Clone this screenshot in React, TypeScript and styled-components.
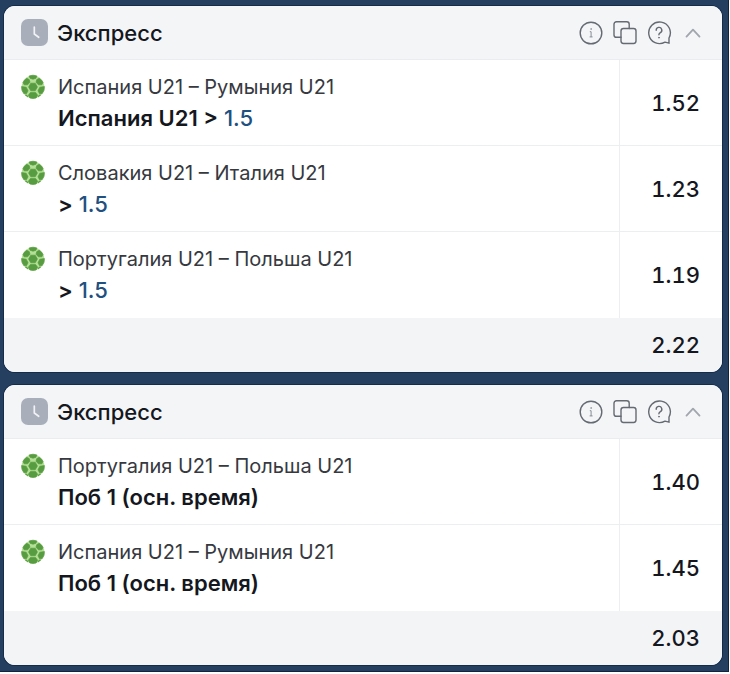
import React, { useState } from "react";
import styled, { createGlobalStyle } from "styled-components";

const GlobalStyle = createGlobalStyle`
  * { box-sizing: border-box; }
  body {
    margin: 0;
    background: #ffffff;
    font-family: Inter, "Noto Sans", sans-serif;
    color: #15171e;
  }
`;

const Page = styled.main`
  display: flex;
  flex-direction: column;
  gap: 13px;
  margin: 0 1px 3px 0;
  padding: 6px 6px 6px 4px;
  background: #243f60;
  border: solid #10233f;
  border-width: 0 1px 1px 0;
`;

const Card = styled.section`
  overflow: hidden;
  border-radius: 11px;
  background: #ffffff;
  box-shadow: 0 0 0 1px #142b49;
`;

const Header = styled.header`
  display: flex;
  align-items: center;
  gap: 9px;
  height: 54px;
  padding: 0 16px 0 17px;
  background: #f3f5f7;
  border-bottom: 1px solid #eaecef;
`;

const Title = styled.h2`
  flex: 1;
  margin: 0;
  font-size: 22px;
  line-height: 28px;
  font-weight: 500;
`;

const Actions = styled.div`
  display: flex;
  align-items: center;
  gap: 8px;
`;

const IconButton = styled.button`
  display: flex;
  padding: 0;
  border: 0;
  background: none;
  color: #666a72;
  cursor: pointer;
`;

const ToggleButton = styled(IconButton)`
  color: #a2a6ad;
`;

const List = styled.ul`
  margin: 0;
  padding: 0;
  list-style: none;
`;

const Row = styled.li`
  display: flex;
  height: 86px;

  &:not(:last-child) {
    border-bottom: 1px solid #eceef0;
  }
`;

const Selection = styled.div`
  display: flex;
  flex: 1;
  gap: 12px;
  padding: 11px 16px 0;
`;

const Match = styled.div`
  font-size: 20px;
  line-height: 32px;
  font-weight: 400;
  color: #363940;
`;

const Outcome = styled.div`
  font-size: 22px;
  line-height: 30px;
  font-weight: 600;
`;

const Line = styled.span`
  font-weight: 500;
  color: #20507f;
`;

const Odds = styled.div`
  display: flex;
  align-items: center;
  justify-content: flex-end;
  width: 103px;
  padding-right: 22px;
  border-left: 1px solid #eceef0;
  font-size: 22px;
  font-weight: 500;
  font-variant-numeric: tabular-nums;
`;

const Total = styled.footer`
  display: flex;
  align-items: center;
  justify-content: flex-end;
  height: 54px;
  padding-right: 22px;
  background: #f3f4f6;
  font-size: 22px;
  font-weight: 500;
  font-variant-numeric: tabular-nums;
`;

const BallIcon = styled.svg`
  flex: none;
  margin-top: 3px;
`;

const ClockBadge = () => (
  <svg width="27" height="27" viewBox="0 0 27 27" aria-hidden="true">
    <rect width="27" height="27" rx="7" fill="#a9afba" />
    <path d="M13.3 8v7l4.4 3.3" fill="none" stroke="#f0f2f5" strokeWidth="1.7" strokeLinecap="round" strokeLinejoin="round" />
  </svg>
);

const Ball = () => (
  <BallIcon width="26" height="26" viewBox="0 0 26 26" aria-hidden="true">
    <circle cx="13" cy="13" r="11.4" fill="#b4df96" />
    <g fill="#579c40" stroke="#579c40" strokeWidth=".7" strokeLinejoin="round">
      <path d="M10.8 9.2h4.4l2.2 3.8-2.2 3.8h-4.4L8.6 13z" />
      <path d="M9.2 1.9Q13 .5 16.8 1.9L16 4.2 13 5.2 10 4.2z" />
      <path d="M6.7 4.3l2.5 1.2.8 2.7-2.4 2.6H4.1L3 8.4Q4.2 5.8 6.7 4.3z" />
      <path d="M19.3 4.3l-2.5 1.2-.8 2.7 2.4 2.6h3.5L23 8.4q-1.2-2.6-3.7-4.1z" />
      <path d="M1.6 12.6l4.6.6 1.8 3.6-1.6 3-2.6-.2Q1.2 16.6 1.6 12.6z" />
      <path d="M24.4 12.6l-4.6.6-1.8 3.6 1.6 3 2.6-.2q2.6-3 2.2-7z" />
      <path d="M10.4 18.6h5.2l2 2.6-1.5 2.8q-3.1.9-6.2 0l-1.5-2.8z" />
      <path d="M5.4 21l1.6.2.9 1.8q-1.6-.8-2.5-2zM20.6 21l-1.6.2-.9 1.8q1.6-.8 2.5-2z" />
    </g>
  </BallIcon>
);

const lineIcon = {
  width: 26,
  height: 26,
  viewBox: "0 0 26 26",
  fill: "none",
  stroke: "currentColor",
  strokeWidth: 1.4,
  strokeLinecap: "round" as const,
  strokeLinejoin: "round" as const,
  "aria-hidden": true,
};

const InfoIcon = () => (
  <svg {...lineIcon}>
    <circle cx="13" cy="13" r="10.8" />
    <path d="M12.2 11.7h.9v5M12 16.9h2.2" strokeWidth="1" stroke="#8b8f96" />
    <circle cx="13" cy="9" r=".5" strokeWidth=".7" stroke="#8b8f96" />
  </svg>
);

const CopyIcon = () => (
  <svg {...lineIcon}>
    <rect x="9" y="8.5" width="15" height="15" rx="2.4" />
    <path d="M9 17.3H4.4A2.4 2.4 0 0 1 2 14.9V4.2a2.4 2.4 0 0 1 2.4-2.4h10.4a2.4 2.4 0 0 1 2.4 2.4v4.3" />
  </svg>
);

const HelpIcon = () => (
  <svg {...lineIcon}>
    <path d="M23 23.2v-5.2A10.8 10.8 0 1 0 19 22.1z" />
    <path d="M10.2 10.3a2.8 2.8 0 1 1 4.2 2.3c-.9.5-1.5 1-1.5 2.2" />
    <circle cx="12.9" cy="17.7" r=".4" strokeWidth=".9" />
  </svg>
);

const ChevronIcon = ({ open }: { open: boolean }) => (
  <svg {...lineIcon} strokeWidth={1.8}>
    <path d={open ? "M6.5 16.6L13 9.7l6.5 6.9" : "M6.5 9.7L13 16.6l6.5-6.9"} />
  </svg>
);

type Pick = { match: string; outcome: string; line?: string; odds: string };
type Bet = { id: string; picks: Pick[]; total: string };

const bets: Bet[] = [
  {
    id: "first",
    total: "2.22",
    picks: [
      { match: "Испания U21 – Румыния U21", outcome: "Испания U21 >", line: "1.5", odds: "1.52" },
      { match: "Словакия U21 – Италия U21", outcome: ">", line: "1.5", odds: "1.23" },
      { match: "Португалия U21 – Польша U21", outcome: ">", line: "1.5", odds: "1.19" },
    ],
  },
  {
    id: "second",
    total: "2.03",
    picks: [
      { match: "Португалия U21 – Польша U21", outcome: "Поб 1 (осн. время)", odds: "1.40" },
      { match: "Испания U21 – Румыния U21", outcome: "Поб 1 (осн. время)", odds: "1.45" },
    ],
  },
];

function BetCard({ bet }: { bet: Bet }) {
  const [open, setOpen] = useState(true);
  return (
    <Card aria-labelledby={bet.id}>
      <Header>
        <ClockBadge />
        <Title id={bet.id}>Экспресс</Title>
        <Actions>
          <IconButton type="button" aria-label="Информация"><InfoIcon /></IconButton>
          <IconButton type="button" aria-label="Копировать"><CopyIcon /></IconButton>
          <IconButton type="button" aria-label="Помощь"><HelpIcon /></IconButton>
          <ToggleButton type="button" aria-label="Свернуть" aria-expanded={open} onClick={() => setOpen(!open)}>
            <ChevronIcon open={open} />
          </ToggleButton>
        </Actions>
      </Header>
      {open && (
        <List>
          {bet.picks.map((pick) => (
            <Row key={pick.match}>
              <Selection>
                <Ball />
                <div>
                  <Match>{pick.match}</Match>
                  <Outcome>
                    {pick.outcome}
                    {pick.line && <Line> {pick.line}</Line>}
                  </Outcome>
                </div>
              </Selection>
              <Odds>{pick.odds}</Odds>
            </Row>
          ))}
        </List>
      )}
      <Total>{bet.total}</Total>
    </Card>
  );
}

export default function App() {
  return (
    <>
      <GlobalStyle />
      <Page>
        {bets.map((bet) => (
          <BetCard key={bet.id} bet={bet} />
        ))}
      </Page>
    </>
  );
}
